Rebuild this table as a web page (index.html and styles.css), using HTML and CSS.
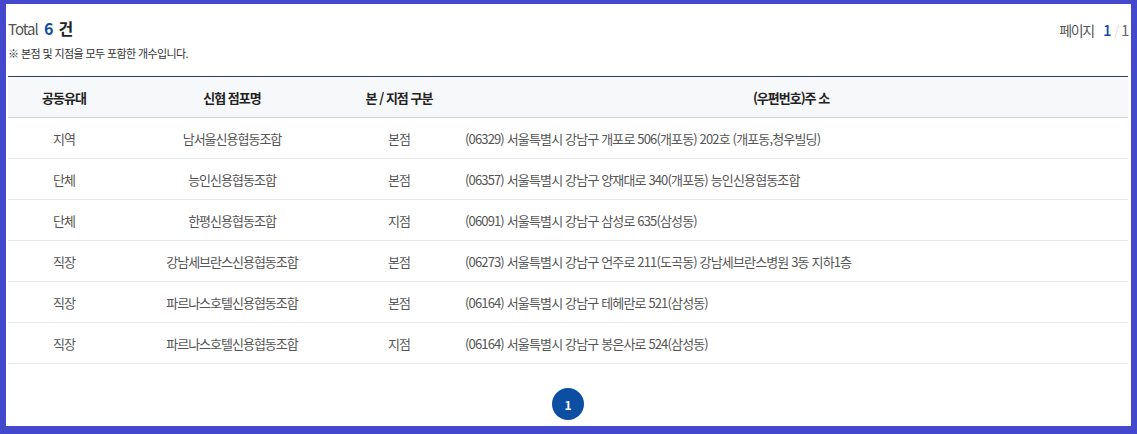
FILE: index.html
```html
<!DOCTYPE html>
<html lang="ko">
<head>
<meta charset="utf-8">
<title>신협 점포 목록</title>
<link rel="stylesheet" href="styles.css">
</head>
<body>
<div class="frame">
  <div class="top">
    <div class="summary">
      <p class="total">Total <strong class="num">6</strong> <strong class="unit">건</strong></p>
      <p class="note">※ 본점 및 지점을 모두 포함한 개수입니다.</p>
    </div>
    <div class="pageinfo">페이지 <span class="cur">1</span><span class="sep">/</span><span class="all">1</span></div>
  </div>
  <table class="list">
    <colgroup>
      <col class="c1"><col class="c2"><col class="c3"><col class="c4">
    </colgroup>
    <thead>
      <tr><th>공동유대</th><th>신협 점포명</th><th>본 / 지점 구분</th><th>(우편번호)주 소</th></tr>
    </thead>
    <tbody>
      <tr><td>지역</td><td>남서울신용협동조합</td><td>본점</td><td class="addr">(06329) 서울특별시 강남구 개포로 506(개포동) 202호 (개포동,청우빌딩)</td></tr>
      <tr><td>단체</td><td>능인신용협동조합</td><td>본점</td><td class="addr">(06357) 서울특별시 강남구 양재대로 340(개포동) 능인신용협동조합</td></tr>
      <tr><td>단체</td><td>한평신용협동조합</td><td>지점</td><td class="addr">(06091) 서울특별시 강남구 삼성로 635(삼성동)</td></tr>
      <tr><td>직장</td><td>강남세브란스신용협동조합</td><td>본점</td><td class="addr">(06273) 서울특별시 강남구 언주로 211(도곡동) 강남세브란스병원 3동 지하1층</td></tr>
      <tr><td>직장</td><td>파르나스호텔신용협동조합</td><td>본점</td><td class="addr">(06164) 서울특별시 강남구 테헤란로 521(삼성동)</td></tr>
      <tr><td>직장</td><td>파르나스호텔신용협동조합</td><td>지점</td><td class="addr">(06164) 서울특별시 강남구 봉은사로 524(삼성동)</td></tr>
    </tbody>
  </table>
  <div class="paging"><span class="page on">1</span></div>
</div>
</body>
</html>
```
FILE: styles.css
```css
* { box-sizing: border-box; }
html, body { margin: 0; padding: 0; background: #fff; }
body {
  font-family: "Noto Sans CJK KR", "Noto Sans", sans-serif;
  color: #555;
  letter-spacing: -1px;
}
.frame {
  width: 1137px;
  height: 434px;
  border-style: solid;
  border-color: #4448cc;
  border-width: 4px 6px 8px 6px;
  padding: 0 3px 0 2px;
  background: #fff;
}
.top {
  display: flex;
  justify-content: space-between;
  align-items: flex-start;
  padding-top: 15px;
}
.total {
  margin: 0;
  height: 20px;
  font-size: 15px;
  line-height: 20px;
  color: #555;
  word-spacing: 3px;
}
.total strong { line-height: 1; }
.total .num { color: #0f4fa8; font-weight: 700; font-size: 16px; }
.total .unit { color: #222; font-weight: 700; font-size: 16px; }
.note {
  margin: 6px 0 0;
  font-size: 11px;
  line-height: 16px;
  color: #333;
  letter-spacing: -0.6px;
}
.pageinfo {
  font-size: 14px;
  line-height: 20px;
  padding-top: 1px;
  color: #555;
  display: flex;
  align-items: baseline;
  letter-spacing: -1.3px;
}
.pageinfo .cur { color: #0f4fa8; font-size: 15px; font-weight: 500; margin-left: 9px; }
.pageinfo .sep { color: #d8d8d8; margin: 0 3px 0 4px; font-size: 13px; }
.pageinfo .all { color: #666; font-size: 15px; }

.list {
  width: 100%;
  margin-top: 15px;
  border-collapse: collapse;
  border-top: 1px solid #2d3a66;
  table-layout: fixed;
  font-size: 13px;
}
.c1 { width: 112px; }
.c2 { width: 224px; }
.c3 { width: 110px; }
.list th {
  height: 41px;
  background: #f7f8fa;
  color: #222;
  font-weight: 700;
  text-align: center;
  border-bottom: 1px solid #d3d3d6;
  padding: 0;
}
.list td {
  height: 41px;
  text-align: center;
  color: #555;
  border-bottom: 1px solid #e8e9ee;
  padding: 0;
}
.list td.addr { text-align: left; padding-left: 11px; letter-spacing: -0.85px; }

.paging {
  display: flex;
  justify-content: center;
  margin-top: 24px;
}
.page {
  width: 32px;
  height: 32px;
  border-radius: 50%;
  display: flex;
  align-items: center;
  justify-content: center;
  font-size: 12px;
  font-weight: 700;
  letter-spacing: 0;
}
.page.on { background: #0b4ea2; color: #fff; }
```
